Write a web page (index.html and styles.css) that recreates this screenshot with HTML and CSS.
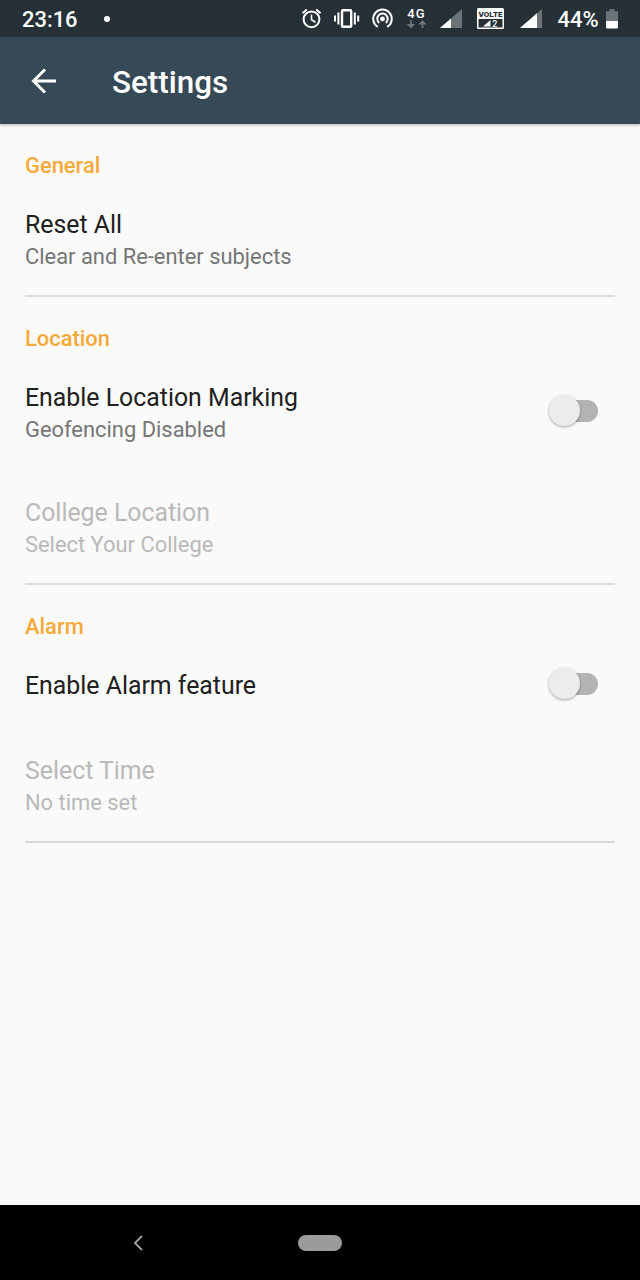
FILE: index.html
```html
<!DOCTYPE html>
<html lang="en">
<head>
<meta charset="utf-8">
<title>Settings</title>
<link rel="stylesheet" href="styles.css">
</head>
<body>
<div class="screen">
  <div class="status">
    <span class="clock">23:16</span>
    <span class="dot"></span>
    <svg class="status-icons" width="250" height="37" viewBox="295 0 250 37">
      <g fill="none" stroke="#fff" stroke-width="2">
        <circle cx="311.500" cy="19.300" r="7.900"/>
        <path d="M311.500 14.500v5.300l4 2.400" stroke-width="1.600"/>
        <path d="M302.500 13.300l4.300-3.700M320.500 13.300l-4.300-3.700"/>
        <rect x="342" y="10.300" width="9.200" height="16.400" rx="1" stroke-width="2.400"/>
        <path d="M338.400 12.500v12M354.800 12.500v12M335 15.500v6M358.200 15.500v6"/>
        <path d="M377.800 26.800a9.300 9.300 0 1 1 9.400 0"/>
        <path d="M379.300 22.900a5.200 5.200 0 1 1 6.400 0"/>
      </g>
      <circle cx="382.500" cy="19" r="2.400" fill="#fff"/>
      <g class="network"><text x="407.300" y="18">4G</text></g>
      <path d="M411 20v6M422.500 28v-6" stroke="#6d7477" stroke-width="1.800"/>
      <path d="M406.800 24h8.400l-4.200 4.400zM418.300 24.500h8.400l-4.200-4.400z" fill="#6d7477"/>
      <path d="M462 9v19h-22z" fill="#6d7477"/>
      <path d="M451 18.500V28h-11z" fill="#fff"/>
      <rect x="477" y="8" width="27" height="21" rx="1.500" fill="#fff"/>
      <path d="M478.500 19h24v8.500h-24z" fill="#263137"/>
      <text class="volte" x="490.500" y="16.700" text-anchor="middle">VOLTE</text>
      <path d="M490.500 20v6.500H483z" fill="#fff"/>
      <text class="sim" x="492.300" y="26.800">2</text>
      <path d="M542 9v19h-22z" fill="#6d7477"/>
      <path d="M537 13.300V28h-17z" fill="#fff"/>
    </svg>
    <span class="percent">44%</span>
    <svg class="battery" width="12" height="20" viewBox="0 0 12 20">
      <path d="M3.500 0h5v2.300H12V12H0V2.300h3.500z" fill="#6d7477"/>
      <path d="M0 12h12v6.500a1 1 0 0 1-1 1H1a1 1 0 0 1-1-1z" fill="#fff"/>
    </svg>
  </div>
  <header class="appbar">
    <svg width="28" height="28" viewBox="0 0 28 28" fill="none" stroke="#fff" stroke-width="2.900"><path d="M26 14H3.500M15 2.500L3.500 14L15 25.500"/></svg>
    <h1 class="heading">Settings</h1>
  </header>
  <main class="content">
    <section class="section">
      <h2 class="category">General</h2>
      <div class="item"><div class="name">Reset All</div><div class="summary">Clear and Re-enter subjects</div></div>
    </section>
    <section class="section">
      <h2 class="category">Location</h2>
      <div class="row">
        <div class="item"><div class="name">Enable Location Marking</div><div class="summary">Geofencing Disabled</div></div>
        <div class="switch"><span class="thumb"></span></div>
      </div>
      <div class="item disabled after-tall"><div class="name">College Location</div><div class="summary">Select Your College</div></div>
    </section>
    <section class="section">
      <h2 class="category">Alarm</h2>
      <div class="row">
        <div class="item"><div class="name">Enable Alarm feature</div></div>
        <div class="switch switch-single"><span class="thumb"></span></div>
      </div>
      <div class="item disabled after-short"><div class="name">Select Time</div><div class="summary">No time set</div></div>
    </section>
  </main>
  <nav class="navbar">
    <svg width="12" height="18" viewBox="0 0 12 18" fill="none" stroke="#9b9b9b" stroke-width="2"><path d="M10 2L3 9l7 7"/></svg>
    <span class="home"></span>
  </nav>
</div>
</body>
</html>
```
FILE: styles.css
```css
* { box-sizing: border-box; }
body { margin: 0; }
.screen {
  width: 640px;
  height: 1280px;
  display: flex;
  flex-direction: column;
  background: #fafafa;
  font-family: Roboto, sans-serif;
}
.status {
  height: 37px;
  display: flex;
  align-items: center;
  background: #263137;
  color: #fff;
}
.clock {
  width: 82px;
  margin-left: 22px;
  font-size: 21.9px;
  font-weight: 500;
  line-height: 37px;
  padding-top: 2px;
}
.dot { width: 6px; height: 6px; border-radius: 50%; background: #fff; }
.status-icons { margin-left: 185px; }
.network { font-size: 13px; font-weight: 500; fill: #fff; letter-spacing: 1px; }
.volte { font-size: 8px; font-weight: 900; fill: #263137; }
.sim { font-size: 9px; font-weight: 500; fill: #fff; }
.percent { width: 48px; margin-left: 12.5px; font-size: 21.9px; font-weight: 500; line-height: 37px; padding-top: 2px; }
.battery { margin-top: 1px; }
.appbar {
  height: 87px;
  display: flex;
  align-items: center;
  padding-left: 30px;
  gap: 54px;
  background: #364956;
  color: #fff;
  box-shadow: 0 1px 3px rgba(0, 0, 0, .3);
}
.heading { margin: 5px 0 0; font-size: 31.4px; font-weight: 500; line-height: 40px; }
.content { flex: 1; padding: 0 25px; }
.section { padding: 26px 0 22px; border-bottom: 2px solid #dadada; }
.category { margin: 0 0 27px; font-size: 21.9px; font-weight: 500; line-height: 32px; color: #f5a938; }
.name { font-size: 24.85px; line-height: 32px; color: #202020; }
.summary { font-size: 21.9px; line-height: 32px; color: #757575; }
.row { display: flex; justify-content: space-between; align-items: center; }
.disabled .name, .disabled .summary { color: #b9b9b9; }
.after-tall { margin-top: 51px; }
.after-short { margin-top: 53px; }
.switch {
  width: 44px;
  height: 22px;
  display: flex;
  align-items: center;
  margin: -7px 17.5px 0 0;
  border-radius: 11px;
  background: #b3b3b3;
}
.switch-single { margin-top: -5px; }
.thumb { flex: none; width: 31px; height: 31px; margin-left: -5px; border-radius: 50%; background: #ececec; box-shadow: 0 1px 3px rgba(0, 0, 0, .35); }
.navbar {
  height: 75px;
  display: flex;
  align-items: center;
  padding-left: 132px;
  gap: 154px;
  background: #000;
}
.home { width: 44px; height: 16px; border-radius: 8px; background: #9b9b9b; }
```
